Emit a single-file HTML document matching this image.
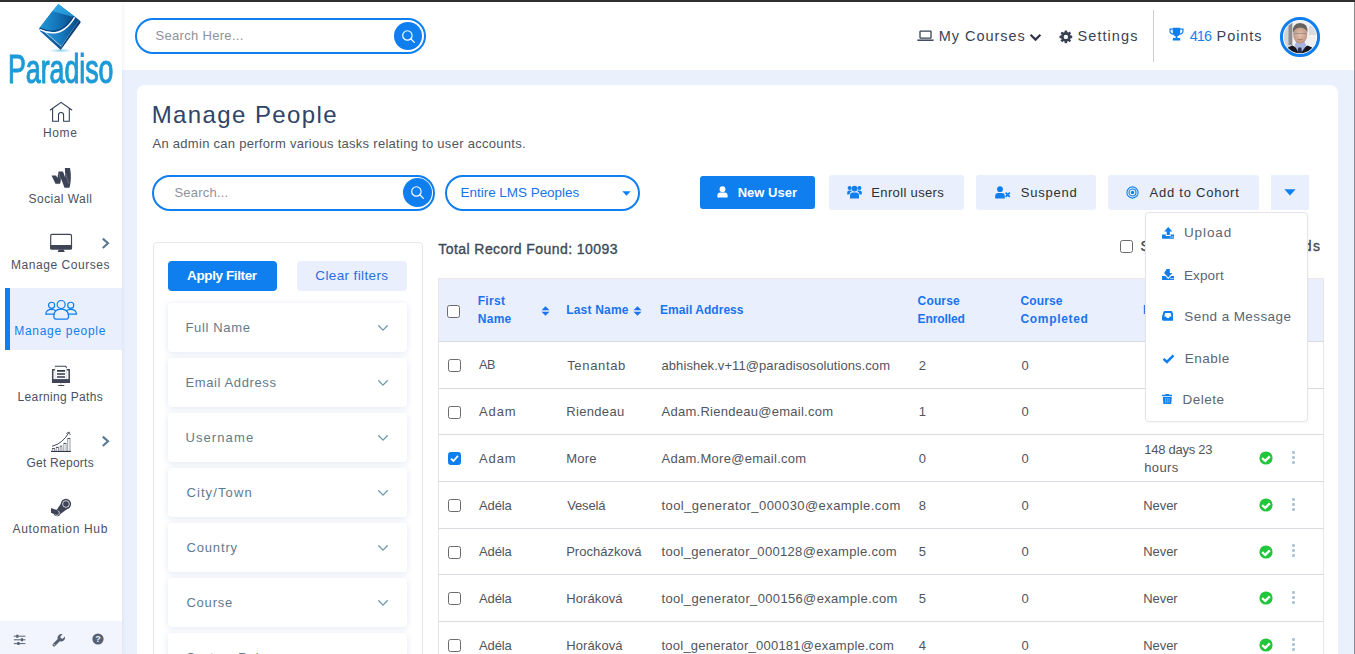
<!DOCTYPE html>
<html lang="en">
<head>
<meta charset="utf-8">
<title>Manage People</title>
<style>
*{box-sizing:border-box;margin:0;padding:0}
html,body{width:1355px;height:654px;overflow:hidden}
body{position:relative;background:#eaf0fc;font-family:"Liberation Sans",sans-serif;color:#3d4653;font-size:13px}
.abs{position:absolute}
.nw{white-space:nowrap}
#topbar{left:0;top:0;width:1355px;height:2px;background:#2e2e2e;z-index:50}
#rightline{right:0;top:2px;width:1px;height:652px;background:#8a8a8a;z-index:50}
#header{left:122px;top:2px;width:1233px;height:68px;background:#fff}
#sidebar{left:0;top:2px;width:122px;height:652px;background:#fff;box-shadow:1px 0 3px rgba(120,140,180,.12)}
#sidefoot{left:0;top:621px;width:122px;height:33px;background:#f2f5fd}
.nav{position:absolute;left:0;width:122px;text-align:center;font-size:13px;color:#3d4653;white-space:nowrap}
.nav.active{color:#0f7ff0}
#activebg{left:5px;top:288px;width:117px;height:62px;background:#e9effc;border-left:5px solid #0f7ff0}
.pill{position:absolute;border:2px solid #0f7ff0;border-radius:19px;background:#fff}
.ph{position:absolute;color:#8a8f98;white-space:nowrap}
.sbtn{position:absolute;width:28px;height:28px;border-radius:50%;background:#0f7ff0}
#card{left:137px;top:85px;width:1201px;height:600px;background:#fff;border-radius:8px}
.btn{position:absolute;top:176px;height:34px;border-radius:3px;background:#e9effc;color:#2b2f36;font-size:14px;white-space:nowrap}
.btn span{position:absolute;top:9px}
#filter{left:153px;top:242px;width:270px;height:430px;border:1px solid #ebe6e9;border-radius:4px;background:#fff}
.fitem{position:absolute;left:168px;width:239px;height:49px;border-radius:4px;background:#fff;box-shadow:0 1px 6px rgba(90,120,190,.18);font-size:14px;color:#5a6b7b}
.fitem span{position:absolute;left:18px;top:15px;white-space:nowrap}
.fitem svg{position:absolute;left:209px;top:21px}
#thead{left:438px;top:279px;width:886px;height:62px;background:#e9effc}
.th{position:absolute;color:#0f7ff0;font-weight:bold;font-size:12.5px;line-height:18px;white-space:nowrap}
.row{position:absolute;left:438px;width:886px;height:0;border-top:1px solid #d9dbe0}
.td{position:absolute;font-size:13px;color:#4a4f57;white-space:nowrap}
.cb{position:absolute;width:13px;height:13px;border:1px solid #6b6b6b;border-radius:2.5px;background:#fff}
.cb.on{background:#0f7ff0;border-color:#0f7ff0}
#dd{left:1145px;top:212px;width:163px;height:210px;background:#fff;border:1px solid #e3e5ea;border-radius:4px;z-index:20;box-shadow:0 1px 3px rgba(0,0,0,.04)}
.ddi{position:absolute;font-size:14px;color:#5a6470;white-space:nowrap}
</style>
</head>
<body>
<div id="header" class="abs"></div>
<div id="sidebar" class="abs"></div>

<!-- SIDEBAR -->
<svg class="abs" style="left:30px;top:0px" width="60" height="56" viewBox="0 0 60 56">
 <defs>
  <linearGradient id="lgA" x1="0" y1="0" x2="1" y2="0"><stop offset="0" stop-color="#2397d8"/><stop offset=".55" stop-color="#1273b6"/><stop offset="1" stop-color="#0a4d8c"/></linearGradient>
  <linearGradient id="lgB" x1="0" y1="0" x2="1" y2="0"><stop offset="0" stop-color="#2fa2e2"/><stop offset=".55" stop-color="#167abe"/><stop offset="1" stop-color="#0a4584"/></linearGradient>
  <linearGradient id="lgC" x1="0" y1="0" x2="1" y2="1"><stop offset="0" stop-color="#35aee8"/><stop offset="1" stop-color="#1a8ccf"/></linearGradient>
  <linearGradient id="lgD" x1="0" y1="0" x2="1" y2="0"><stop offset="0" stop-color="#1672b6"/><stop offset="1" stop-color="#0b4f90"/></linearGradient>
  <radialGradient id="rg1" cx=".5" cy=".5" r=".5"><stop offset="0" stop-color="#7fcdee" stop-opacity=".95"/><stop offset="1" stop-color="#9ad8f2" stop-opacity="0"/></radialGradient>
 </defs>
 <ellipse cx="30.5" cy="50.6" rx="12" ry="2.2" fill="url(#rg1)"/>
 <path d="M9.6 27.8 L31.25 46.7 L30.8 49.9 L10.4 31.6 Q9.1 29.8 9.6 27.8Z" fill="url(#lgD)"/>
 <path d="M31.25 46.7 L49.2 20.1 Q51 21.2 50.5 22.8 L30.8 49.7Z" fill="#0a3f78"/>
 <path d="M28.3 3.9 L49.2 20.1 L31.4 46.2 L9.9 27.6Z" fill="url(#lgB)"/>
 <path d="M22.4 11.1 L43.2 16.6 C33.5 32.6 22 34 9.8 28.4 L9.6 27.8Z" fill="url(#lgA)"/>
 <path d="M28.3 3.9 L44.6 16.5 L43.2 16.9 L22.4 11.1Z" fill="url(#lgC)"/>
 <path d="M9.7 28.2 C22 34, 33.6 32.6, 43.4 16.4" fill="none" stroke="#0b4784" stroke-width="1.4"/>
 <path d="M10 29.7 C22.4 35.6, 34.6 34, 44.6 17.3" fill="none" stroke="#fff" stroke-width="1.4"/>
</svg>
<div class="abs nw" id="logotxt" style="left:7.6px;top:47px;height:45px;color:#1d9ad7;font-size:40px;line-height:45px;transform-origin:0 0;transform:scaleX(.668);-webkit-text-stroke:1.1px #1d9ad7">Paradiso</div>

<div class="abs" id="activebg"></div>

<svg class="abs" style="left:49px;top:100px" width="24" height="23" viewBox="0 0 24 23" fill="none" stroke="#2c3a55" stroke-width="1.05" stroke-linejoin="miter" stroke-linecap="round"><path d="M1.3 10 L12.05 2.3 L22.8 10"/><path d="M3.6 8.6 V21.3 H9.5 V14.95 A2.55 2.55 0 0 1 14.6 14.95 V21.3 H20.3 V8.6"/></svg>

<svg class="abs" style="left:50px;top:167px" width="23" height="22" viewBox="0 0 23 22"><path d="M1.5 8.5 H6.1 L7.4 11 L8.5 4.5 H13 L15.2 10.5 L14.9 1 H20 Q22 11 19.5 20.8 H14.5 L11.2 12 L10.1 16.8 H5.5Z" fill="#3d4356"/><path d="M8.6 5.6 L10.7 13.4 M15.3 6 L18.8 16.6" stroke="#fff" stroke-opacity=".45" stroke-width=".5" fill="none"/></svg>

<svg class="abs" style="left:50px;top:233px" width="23" height="20" viewBox="0 0 23 20"><rect x=".7" y="1.4" width="20.8" height="14.6" rx="1.3" fill="#fff" stroke="#3f4456" stroke-width="1.15"/><path d="M.15 12.1 H22.05 V15.3 Q22.05 16.55 20.8 16.55 H1.4 Q.15 16.55 .15 15.3Z" fill="#3f4456"/><path d="M8.8 16.5 H13.6 L14.8 19 H7.6Z" fill="#3f4456"/></svg>
<svg class="abs" style="left:101px;top:237px" width="10" height="13" viewBox="0 0 10 13" fill="none" stroke="#5a7890" stroke-width="2.1"><path d="M1.8 1.6 L7 6.3 L1.8 11"/></svg>

<svg class="abs" style="left:44px;top:299px" width="34" height="22" viewBox="0 0 34 22" fill="none" stroke="#0f7ff0" stroke-width="1.2" stroke-linejoin="round" stroke-linecap="round"><circle cx="17.15" cy="5.5" r="4"/><circle cx="7.6" cy="6.3" r="3.05"/><circle cx="26.7" cy="6.3" r="3.05"/><path d="M9.8 17.4 C9.8 12.4 12.6 10.2 17.15 10.2 C21.8 10.2 24.6 12.4 24.6 17.4 Q24.6 20.2 21.8 20.2 H12.6 Q9.8 20.2 9.8 17.4Z"/><path d="M9.9 15.1 H1.7 Q2.4 10.4 7.6 10.4 Q10.2 10.4 11.7 11.8"/><path d="M24.5 15.1 H32.6 Q31.9 10.4 26.7 10.4 Q24.1 10.4 22.6 11.8"/></svg>

<svg class="abs" style="left:50px;top:365px" width="22" height="22" viewBox="0 0 22 22"><rect x="2.7" y="4.8" width="16.5" height="12.4" fill="#fff" stroke="#3f4456" stroke-width="1.5"/><rect x="2" y="14.1" width="17.95" height="3.8" fill="#3f4456"/><path d="M4.9 14.1 V.9 H15.3 L16.8 2.4 V14.1Z" fill="#fff"/><path d="M4.9 1.3 H15.4 L16.8 2.7" fill="none" stroke="#3f4456" stroke-width="1.1"/><path d="M5.1 1.5 V14 M16.6 2.8 V14" stroke="#3f4456" stroke-opacity=".35" stroke-width=".5"/><path d="M7 5.9 H15.1 M7 8.95 H15.1 M7 12 H15.1" stroke="#343a4c" stroke-width="1.6"/><path d="M11 18 V20" stroke="#3f4456" stroke-opacity=".4" stroke-width=".9"/><path d="M8.6 20.45 H13.9" stroke="#3f4456" stroke-width="1.1" stroke-linecap="round"/></svg>

<svg class="abs" style="left:49px;top:430px" width="24" height="23" viewBox="0 0 24 23" fill="none" stroke="#2f3548"><path d="M2 21.45 H21.9" stroke-width="1.1"/><path d="M3 18.6 H5.9 M6.9 17.4 H9.8 M10.8 16.2 H13.2 M14.5 13.4 H17.4 M18.4 8.5 H21.3" stroke-width="1" stroke-opacity=".9"/><path d="M3.3 19 V21 M5.6 19 V21 M7.2 18 V21 M9.5 18 V21 M11.1 17 V21 M12.9 17 V21 M14.8 14 V21 M17.1 14 V21 M18.7 9 V21 M21 9 V21" stroke-width=".7" stroke-opacity=".7"/><path d="M3 16.3 Q14 13.4 19.8 2.6" stroke-width="1" stroke-opacity=".9"/><path d="M17.2 3.5 L20.2 2 L21.3 5" stroke-width=".9" stroke-opacity=".8"/></svg>
<svg class="abs" style="left:101px;top:435px" width="10" height="13" viewBox="0 0 10 13" fill="none" stroke="#5a7890" stroke-width="2.1"><path d="M1.8 1.6 L7 6.3 L1.8 11"/></svg>

<svg class="abs" style="left:49px;top:497px" width="24" height="22" viewBox="0 0 24 22"><g fill="#3f4456"><circle cx="16.95" cy="7" r="5.15"/><circle cx="8.1" cy="16" r="3.25"/><path d="M7.6 13 L12.2 6.2 L19 11.4 L11 17.2Z"/><path d="M2 10.9 L9 13.6 L6 17.6 L2 15.7Z"/></g><circle cx="16.95" cy="7" r="3.35" fill="none" stroke="#fff" stroke-width=".75"/><path d="M8.6 13.6 A2.45 2.45 0 1 1 6.1 17.6" fill="none" stroke="#fff" stroke-width=".7"/></svg>

<div class="abs" id="sidefoot"></div>
<svg class="abs" style="left:13px;top:634px" width="13" height="12" viewBox="0 0 13 12" stroke="#566072" fill="none"><path d="M.8 2.2 H12.4 M.8 5.8 H12.4 M.8 9.6 H12.4" stroke-width="1"/><path d="M4.3 .7 V3.7 M9 4.3 V7.3 M5.4 8.1 V11.1" stroke-width="2.2"/></svg>
<svg class="abs" style="left:52px;top:633px" width="14" height="14" viewBox="0 0 14 14"><path d="M12.9 3.6 L10.7 5.8 L8.8 5.3 L8.3 3.4 L10.5 1.2 A3.9 3.9 0 0 0 5.7 6.1 L1 10.8 A1.45 1.45 0 0 0 3.1 12.9 L7.8 8.2 A3.9 3.9 0 0 0 12.9 3.6Z" fill="#566072"/><circle cx="2.2" cy="11.7" r=".6" fill="#f2f5fd"/></svg>
<svg class="abs" style="left:91.6px;top:633.4px" width="12" height="12" viewBox="0 0 12 12"><circle cx="6" cy="6" r="5.6" fill="#566072"/><text x="6" y="9.3" text-anchor="middle" font-family="Liberation Sans, sans-serif" font-weight="bold" font-size="9" fill="#f2f5fd">?</text></svg>

<!-- HEADER -->
<div class="pill" style="left:135px;top:18px;width:291px;height:36px"></div>
<div class="sbtn" style="left:394px;top:22px"></div>
<svg class="abs" style="left:401px;top:29px" width="15" height="15" viewBox="0 0 15 15" fill="none" stroke="#fff" stroke-width="1.15" stroke-linecap="round"><circle cx="6.4" cy="6.4" r="4.7"/><path d="M10 10 L13.4 13.4"/></svg>

<svg class="abs" style="left:917px;top:30px" width="17" height="12" viewBox="0 0 17 12" fill="none" stroke="#3b4256"><rect x="3" y="1.1" width="11" height="7" rx=".6" stroke-width="1.3"/><path d="M.4 10.2 H16.6" stroke-width="1.5"/></svg>
<svg class="abs" style="left:1029px;top:33px" width="13" height="9" viewBox="0 0 13 9" fill="none" stroke="#2f3545" stroke-width="2.2"><path d="M1.6 1.8 L6.5 6.6 L11.4 1.8"/></svg>
<svg class="abs" style="left:1059px;top:29.6px" width="14" height="14" viewBox="0 0 14 14"><g fill="#3a4054" transform="translate(6.87 6.9)"><circle r="4.85"/><g id="gt"><rect x="-1.3" y="-6.35" width="2.6" height="12.7" rx=".4"/></g><use href="#gt" transform="rotate(45)"/><use href="#gt" transform="rotate(90)"/><use href="#gt" transform="rotate(135)"/><circle r="2.2" fill="#fff"/></g></svg>
<div class="abs" style="left:1153px;top:10px;width:1px;height:52px;background:#cfcfcf"></div>
<svg class="abs" style="left:1169px;top:27px" width="15" height="14" viewBox="0 0 15 14" fill="#0f7ff0"><path d="M3.8 .8 H11.2 V5 Q11.2 8.6 8.4 9.2 V11 H10.6 Q11.2 11 11.2 11.6 V13.4 H3.8 V11.6 Q3.8 11 4.4 11 H6.6 V9.2 Q3.8 8.6 3.8 5Z"/><path d="M3.9 2.2 H1 V4 Q1 6.8 4.6 7.2 M11.1 2.2 H14 V4 Q14 6.8 10.4 7.2" fill="none" stroke="#0f7ff0" stroke-width="1.2"/></svg>
<svg class="abs" style="left:1279px;top:16px" width="42" height="42" viewBox="0 0 42 42">
 <defs><clipPath id="avc"><circle cx="21" cy="21" r="16.2"/></clipPath>
 <filter id="avb" x="-10%" y="-10%" width="120%" height="120%"><feGaussianBlur stdDeviation=".55"/></filter>
 <radialGradient id="avf" cx=".5" cy=".5" r=".6"><stop offset="0" stop-color="#e3c3b0"/><stop offset=".7" stop-color="#c79f8a"/><stop offset="1" stop-color="#9c7866"/></radialGradient></defs>
 <circle cx="21" cy="21" r="18.6" fill="#fff" stroke="#0f7ff0" stroke-width="3"/>
 <g clip-path="url(#avc)"><g filter="url(#avb)">
  <rect x="0" y="0" width="42" height="42" fill="#f1f1f2"/>
  <rect x="4" y="3" width="10" height="28" fill="#d4d4d6"/>
  <rect x="9.5" y="3" width="3.6" height="26" fill="#8d8d91"/>
  <rect x="30" y="10" width="8" height="9" fill="#dcdcde"/>
  <path d="M3 41 Q5 31.5 13.5 29.4 L21 34 L28.5 29.4 Q37 31.5 39 41Z" fill="#15171d"/>
  <path d="M15.6 29.2 L20.6 39 L27.4 29.4 L25 25 H17.6Z" fill="#a9b3dd"/>
  <path d="M19.4 31.6 L22.2 31.4 L23.4 39 H17.6Z" fill="#2a3150"/>
  <ellipse cx="21.2" cy="18.6" rx="7" ry="8.9" fill="url(#avf)"/>
  <path d="M14 17 Q12.8 7.4 21 7 Q29.4 7.2 28.4 17 Q27.4 11.8 21.2 11.4 Q15.6 11.6 14 17Z" fill="#66625f"/>
  <path d="M15.4 17.4 H27" stroke="#6f6a70" stroke-width=".7" opacity=".8"/>
  <path d="M18.6 23.2 Q21.2 24.4 23.8 23.2" stroke="#9a6a5c" stroke-width=".7" fill="none"/>
 </g></g>
</svg>
<div id="topbar" class="abs"></div>
<div id="rightline" class="abs"></div>
<div id="card" class="abs"></div>
<!--MAIN-START-->
<div class="abs nw" style="left:43.0px;top:125.1px;font-size:12px;line-height:16px;color:#4b5160;letter-spacing:0.62px">Home</div>
<div class="abs nw" style="left:28.6px;top:191.1px;font-size:12px;line-height:16px;color:#4b5160;letter-spacing:0.44px">Social Wall</div>
<div class="abs nw" style="left:10.9px;top:257.0px;font-size:12px;line-height:16px;color:#4b5160;letter-spacing:0.56px">Manage Courses</div>
<div class="abs nw" style="left:14.3px;top:323.2px;font-size:12px;line-height:16px;color:#0f7ff0;letter-spacing:0.69px">Manage people</div>
<div class="abs nw" style="left:17.6px;top:389.0px;font-size:12px;line-height:16px;color:#4b5160;letter-spacing:0.34px">Learning Paths</div>
<div class="abs nw" style="left:26.4px;top:455.2px;font-size:12px;line-height:16px;color:#4b5160;letter-spacing:0.26px">Get Reports</div>
<div class="abs nw" style="left:12.5px;top:521.3px;font-size:12px;line-height:16px;color:#4b5160;letter-spacing:0.68px">Automation Hub</div>
<div class="abs nw" style="left:155.4px;top:27.2px;font-size:13px;line-height:17px;color:#8e9299;letter-spacing:0.32px">Search Here...</div>
<div class="abs nw" style="left:938.7px;top:26.5px;font-size:14.5px;line-height:19px;color:#3b4256;letter-spacing:0.98px">My Courses</div>
<div class="abs nw" style="left:1077.5px;top:26.5px;font-size:14.5px;line-height:19px;color:#3b4256;letter-spacing:1.07px">Settings</div>
<div class="abs nw" style="left:1189.7px;top:26.5px;font-size:14.5px;line-height:19px;color:#1a7ff0;letter-spacing:-0.91px">416</div>
<div class="abs nw" style="left:1216.6px;top:26.5px;font-size:14.5px;line-height:19px;color:#3b4256;letter-spacing:0.91px">Points</div>
<div class="abs nw" style="left:151.7px;top:98.6px;font-size:24px;line-height:31px;color:#2f4468;letter-spacing:1.40px">Manage People</div>
<div class="abs nw" style="left:152.5px;top:135.0px;font-size:13px;line-height:17px;color:#4f5560;letter-spacing:0.28px">An admin can perform various tasks relating to user accounts.</div>
<div class="pill" style="left:152px;top:175px;width:283px;height:36px"></div>
<div class="abs nw" style="left:174.5px;top:184.4px;font-size:13px;line-height:17px;color:#8e9299;letter-spacing:0.20px">Search...</div>
<div class="sbtn" style="left:402.6px;top:178.2px;width:29px;height:29px"></div>
<svg class="abs" style="left:409.8px;top:185.4px" width="15" height="15" viewBox="0 0 15 15" fill="none" stroke="#fff" stroke-width="1.15" stroke-linecap="round"><circle cx="6.4" cy="6.4" r="4.7"/><path d="M10 10 L13.4 13.4"/></svg>
<div class="pill" style="left:445px;top:175px;width:195px;height:36px"></div>
<div class="abs nw" style="left:460.6px;top:183.9px;font-size:13.5px;line-height:18px;color:#1a73e8;letter-spacing:-0.04px">Entire LMS Peoples</div>
<svg class="abs" style="left:622px;top:191px" width="9" height="5" viewBox="0 0 9 5"><path d="M.3 .2 H8.7 L4.5 4.8Z" fill="#0f7ff0"/></svg>
<div class="btn" style="left:700px;top:176px;width:115px;height:33px;background:#0f7ff0"></div>
<svg class="abs" style="left:717px;top:186px" width="11" height="12" viewBox="0 0 11 12" fill="#fff"><circle cx="5.5" cy="3.2" r="2.9"/><path d="M.4 11.6 V9.4 Q.4 6.4 3.4 6.4 H7.6 Q10.6 6.4 10.6 9.4 V11.6Z"/></svg>
<div class="abs nw" style="left:737.7px;top:184.3px;font-size:13px;line-height:17px;color:#fff;letter-spacing:0.02px;font-weight:bold">New User</div>
<div class="btn" style="left:829px;top:175px;width:135px;height:35px"></div>
<svg class="abs" style="left:847px;top:185px" width="15" height="14" viewBox="0 0 15 14" fill="#0f7ff0"><circle cx="7.5" cy="3.6" r="2.9"/><circle cx="2.6" cy="3" r="2"/><circle cx="12.4" cy="3" r="2"/><path d="M3 13.6 V10.6 Q3 7.4 6 7.4 H9 Q12 7.4 12 10.6 V13.6Z"/><path d="M.2 9.6 V7.6 Q.2 5.6 2.2 5.6 H4 Q4.6 5.6 5 6 Q2.6 7 2.4 9.6Z"/><path d="M14.8 9.6 V7.6 Q14.8 5.6 12.8 5.6 H11 Q10.4 5.6 10 6 Q12.4 7 12.6 9.6Z"/></svg>
<div class="abs nw" style="left:871.3px;top:184.3px;font-size:13px;line-height:17px;color:#2b2f36;letter-spacing:0.35px">Enroll users</div>
<div class="btn" style="left:976px;top:175px;width:120px;height:35px"></div>
<svg class="abs" style="left:995px;top:186px" width="16" height="13" viewBox="0 0 16 13" fill="#0f7ff0"><circle cx="5" cy="3.2" r="2.9"/><path d="M.2 12.4 V10 Q.2 7 3.2 7 H6.8 Q9.8 7 9.8 10 V12.4Z"/><path d="M10.6 6.6 L14.8 10.8 M14.8 6.6 L10.6 10.8" stroke="#0f7ff0" stroke-width="1.7" fill="none"/></svg>
<div class="abs nw" style="left:1020.8px;top:184.3px;font-size:13px;line-height:17px;color:#2b2f36;letter-spacing:0.78px">Suspend</div>
<div class="btn" style="left:1108px;top:175px;width:151px;height:35px"></div>
<svg class="abs" style="left:1126px;top:186px" width="13" height="13" viewBox="0 0 13 13" fill="none" stroke="#0f7ff0"><circle cx="6.5" cy="6.5" r="5.6" stroke-width="1.1"/><circle cx="6.5" cy="6.5" r="3.5" stroke-width="1.1"/><circle cx="6.5" cy="6.5" r="1.7" fill="#0f7ff0" stroke="none"/></svg>
<div class="abs nw" style="left:1149.6px;top:184.3px;font-size:13px;line-height:17px;color:#2b2f36;letter-spacing:0.75px">Add to Cohort</div>
<div class="btn" style="left:1271px;top:175px;width:38px;height:35px;border-radius:0"></div>
<svg class="abs" style="left:1284px;top:189px" width="12" height="7" viewBox="0 0 12 7"><path d="M.4 .3 H11.6 L6 6.6Z" fill="#0f7ff0"/></svg>
<div class="abs" id="filter"></div>
<div class="abs" style="left:168px;top:261px;width:109px;height:30px;border-radius:4px;background:#0f7ff0"></div>
<div class="abs nw" style="left:187.1px;top:267.4px;font-size:13.5px;line-height:18px;color:#fff;letter-spacing:-0.39px;font-weight:bold">Apply Filter</div>
<div class="abs" style="left:297px;top:261px;width:110px;height:30px;border-radius:4px;background:#e9effc"></div>
<div class="abs nw" style="left:315.3px;top:267.4px;font-size:13.5px;line-height:18px;color:#2a6fe0;letter-spacing:0.37px">Clear filters</div>
<div class="fitem" style="top:303px"><svg width="12" height="8" viewBox="0 0 12 8" fill="none" stroke="#6d9aa8" stroke-width="1.3" stroke-linecap="round" stroke-linejoin="round"><path d="M1.7 1.7 L6 6.1 L10.3 1.7"/></svg></div>
<div class="abs nw" style="left:185.4px;top:319.2px;font-size:13px;line-height:17px;color:#5f7b8c;letter-spacing:0.66px">Full Name</div>
<div class="fitem" style="top:358px"><svg width="12" height="8" viewBox="0 0 12 8" fill="none" stroke="#6d9aa8" stroke-width="1.3" stroke-linecap="round" stroke-linejoin="round"><path d="M1.7 1.7 L6 6.1 L10.3 1.7"/></svg></div>
<div class="abs nw" style="left:185.4px;top:374.2px;font-size:13px;line-height:17px;color:#5f7b8c;letter-spacing:0.62px">Email Address</div>
<div class="fitem" style="top:413px"><svg width="12" height="8" viewBox="0 0 12 8" fill="none" stroke="#6d9aa8" stroke-width="1.3" stroke-linecap="round" stroke-linejoin="round"><path d="M1.7 1.7 L6 6.1 L10.3 1.7"/></svg></div>
<div class="abs nw" style="left:185.4px;top:429.2px;font-size:13px;line-height:17px;color:#5f7b8c;letter-spacing:1.11px">Username</div>
<div class="fitem" style="top:468px"><svg width="12" height="8" viewBox="0 0 12 8" fill="none" stroke="#6d9aa8" stroke-width="1.3" stroke-linecap="round" stroke-linejoin="round"><path d="M1.7 1.7 L6 6.1 L10.3 1.7"/></svg></div>
<div class="abs nw" style="left:186.4px;top:484.2px;font-size:13px;line-height:17px;color:#5f7b8c;letter-spacing:1.11px">City/Town</div>
<div class="fitem" style="top:523px"><svg width="12" height="8" viewBox="0 0 12 8" fill="none" stroke="#6d9aa8" stroke-width="1.3" stroke-linecap="round" stroke-linejoin="round"><path d="M1.7 1.7 L6 6.1 L10.3 1.7"/></svg></div>
<div class="abs nw" style="left:186.4px;top:539.2px;font-size:13px;line-height:17px;color:#5f7b8c;letter-spacing:0.86px">Country</div>
<div class="fitem" style="top:578px"><svg width="12" height="8" viewBox="0 0 12 8" fill="none" stroke="#6d9aa8" stroke-width="1.3" stroke-linecap="round" stroke-linejoin="round"><path d="M1.7 1.7 L6 6.1 L10.3 1.7"/></svg></div>
<div class="abs nw" style="left:186.4px;top:594.2px;font-size:13px;line-height:17px;color:#5f7b8c;letter-spacing:0.80px">Course</div>
<div class="fitem" style="top:633px"><svg width="12" height="8" viewBox="0 0 12 8" fill="none" stroke="#6d9aa8" stroke-width="1.3" stroke-linecap="round" stroke-linejoin="round"><path d="M1.7 1.7 L6 6.1 L10.3 1.7"/></svg></div>
<div class="abs nw" style="left:186.4px;top:649.2px;font-size:13px;line-height:17px;color:#5f7b8c;letter-spacing:0.65px">System Role</div>
<div class="abs nw" style="left:438.3px;top:239.5px;font-size:14px;line-height:18px;color:#3c4a57;letter-spacing:0.43px;-webkit-text-stroke:0.35px #3c4a57">Total Record Found: 10093</div>
<div class="cb" style="left:1120px;top:240px"></div>
<div class="abs nw" style="left:1140.5px;top:236.6px;font-size:14px;line-height:18px;color:#3c4a57;letter-spacing:1.27px;-webkit-text-stroke:0.35px #3c4a57">Select all 10093 records</div>
<div class="abs" id="thead"></div>
<div class="abs" style="left:438px;top:278px;width:886px;height:1px;background:#efe6e8"></div>
<div class="abs" style="left:438px;top:278px;width:1px;height:380px;background:#e9e4e6"></div>
<div class="abs" style="left:1323px;top:278px;width:1px;height:380px;background:#e9e4e6"></div>
<div class="cb" style="left:447px;top:305px"></div>
<div class="abs nw" style="left:477.7px;top:293.1px;font-size:12px;line-height:16px;color:#1a73f0;letter-spacing:0.30px;font-weight:bold">First</div>
<div class="abs nw" style="left:477.7px;top:311.2px;font-size:12px;line-height:16px;color:#1a73f0;letter-spacing:0.30px;font-weight:bold">Name</div>
<svg class="abs" style="left:540.8px;top:305.6px" width="9" height="10" viewBox="0 0 9 10" fill="#1a73f0"><path d="M4.5 .2 L8.5 4.2 H.5Z"/><path d="M4.5 9.8 L8.5 5.8 H.5Z"/></svg>
<div class="abs nw" style="left:566.2px;top:302.2px;font-size:12px;line-height:16px;color:#1a73f0;letter-spacing:0.20px;font-weight:bold">Last Name</div>
<svg class="abs" style="left:633.3px;top:305.6px" width="9" height="10" viewBox="0 0 9 10" fill="#1a73f0"><path d="M4.5 .2 L8.5 4.2 H.5Z"/><path d="M4.5 9.8 L8.5 5.8 H.5Z"/></svg>
<div class="abs nw" style="left:660.0px;top:302.2px;font-size:12px;line-height:16px;color:#1a73f0;letter-spacing:0.05px;font-weight:bold">Email Address</div>
<div class="abs nw" style="left:917.6px;top:293.1px;font-size:12px;line-height:16px;color:#1a73f0;letter-spacing:0.15px;font-weight:bold">Course</div>
<div class="abs nw" style="left:917.6px;top:311.2px;font-size:12px;line-height:16px;color:#1a73f0;letter-spacing:-0.10px;font-weight:bold">Enrolled</div>
<div class="abs nw" style="left:1020.4px;top:293.1px;font-size:12px;line-height:16px;color:#1a73f0;letter-spacing:0.15px;font-weight:bold">Course</div>
<div class="abs nw" style="left:1020.4px;top:311.2px;font-size:12px;line-height:16px;color:#1a73f0;letter-spacing:0.69px;font-weight:bold">Completed</div>
<div class="abs nw" style="left:1143.0px;top:302.2px;font-size:12px;line-height:16px;color:#1a73f0;letter-spacing:0.30px;font-weight:bold">Last Access</div>
<div class="row" style="top:341px"></div>
<div class="cb" style="left:448px;top:359.4px"></div>
<div class="abs nw" style="left:479.0px;top:357.1px;font-size:12.61px;line-height:16px;color:#50555d;letter-spacing:-0.37px">AB</div>
<div class="abs nw" style="left:567.2px;top:356.6px;font-size:13px;line-height:17px;color:#50555d;letter-spacing:0.66px">Tenantab</div>
<div class="abs nw" style="left:661.5px;top:356.6px;font-size:13px;line-height:17px;color:#50555d;letter-spacing:0.08px">abhishek.v+11@paradisosolutions.com</div>
<div class="abs nw" style="left:918.8px;top:356.6px;font-size:13px;line-height:17px;color:#50555d;letter-spacing:0.33px">2</div>
<div class="abs nw" style="left:1021.5px;top:356.6px;font-size:13px;line-height:17px;color:#50555d;letter-spacing:0.33px">0</div>
<div class="row" style="top:388px"></div>
<div class="cb" style="left:448px;top:405.9px"></div>
<div class="abs nw" style="left:479.0px;top:403.1px;font-size:13px;line-height:17px;color:#50555d;letter-spacing:0.89px">Adam</div>
<div class="abs nw" style="left:566.2px;top:403.1px;font-size:13px;line-height:17px;color:#50555d;letter-spacing:0.34px">Riendeau</div>
<div class="abs nw" style="left:661.5px;top:403.1px;font-size:13px;line-height:17px;color:#50555d;letter-spacing:0.27px">Adam.Riendeau@email.com</div>
<div class="abs nw" style="left:918.8px;top:403.1px;font-size:13px;line-height:17px;color:#50555d;letter-spacing:0.33px">1</div>
<div class="abs nw" style="left:1021.5px;top:403.1px;font-size:13px;line-height:17px;color:#50555d;letter-spacing:0.33px">0</div>
<div class="row" style="top:434px"></div>
<div class="cb on" style="left:448px;top:452.4px"><svg width="11" height="11" viewBox="0 0 11 11" style="position:absolute;left:0;top:0" fill="none" stroke="#fff" stroke-width="1.8"><path d="M2 5.6 L4.4 8 L9 2.8"/></svg></div>
<div class="abs nw" style="left:479.0px;top:449.6px;font-size:13px;line-height:17px;color:#50555d;letter-spacing:0.89px">Adam</div>
<div class="abs nw" style="left:566.2px;top:449.6px;font-size:13px;line-height:17px;color:#50555d;letter-spacing:0.24px">More</div>
<div class="abs nw" style="left:661.5px;top:449.6px;font-size:13px;line-height:17px;color:#50555d;letter-spacing:0.28px">Adam.More@email.com</div>
<div class="abs nw" style="left:918.8px;top:449.6px;font-size:13px;line-height:17px;color:#50555d;letter-spacing:0.33px">0</div>
<div class="abs nw" style="left:1021.5px;top:449.6px;font-size:13px;line-height:17px;color:#50555d;letter-spacing:0.33px">0</div>
<div class="abs nw" style="left:1144.3px;top:440.6px;font-size:13px;line-height:17px;color:#50555d;letter-spacing:-0.26px">148 days 23</div>
<div class="abs nw" style="left:1144.3px;top:458.6px;font-size:13px;line-height:17px;color:#50555d;letter-spacing:0.33px">hours</div>
<svg class="abs" style="left:1259.1px;top:451.0px" width="14" height="14" viewBox="0 0 14 14"><circle cx="7" cy="7" r="6.6" fill="#22c63a"/><path d="M3.1 7.2 L6.3 9.9 L10.8 5.4" fill="none" stroke="#fff" stroke-width="2.3"/></svg>
<svg class="abs" style="left:1291px;top:449.9px" width="5" height="15" viewBox="0 0 5 15" fill="#abc5d7"><rect x="1" y="1" width="3" height="3" rx="1.2"/><rect x="1" y="6" width="3" height="3" rx="1.2"/><rect x="1" y="11" width="3" height="3" rx="1.2"/></svg>
<div class="row" style="top:481px"></div>
<div class="cb" style="left:448px;top:499.4px"></div>
<div class="abs nw" style="left:479.0px;top:496.6px;font-size:13px;line-height:17px;color:#50555d;letter-spacing:-0.10px">Adéla</div>
<div class="abs nw" style="left:567.2px;top:496.6px;font-size:13px;line-height:17px;color:#50555d;letter-spacing:-0.14px">Veselá</div>
<div class="abs nw" style="left:661.5px;top:496.6px;font-size:13px;line-height:17px;color:#50555d;letter-spacing:0.43px">tool_generator_000030@example.com</div>
<div class="abs nw" style="left:918.8px;top:496.6px;font-size:13px;line-height:17px;color:#50555d;letter-spacing:0.33px">8</div>
<div class="abs nw" style="left:1021.5px;top:496.6px;font-size:13px;line-height:17px;color:#50555d;letter-spacing:0.33px">0</div>
<div class="abs nw" style="left:1143.3px;top:496.6px;font-size:13px;line-height:17px;color:#50555d;letter-spacing:-0.09px">Never</div>
<svg class="abs" style="left:1259.1px;top:498.0px" width="14" height="14" viewBox="0 0 14 14"><circle cx="7" cy="7" r="6.6" fill="#22c63a"/><path d="M3.1 7.2 L6.3 9.9 L10.8 5.4" fill="none" stroke="#fff" stroke-width="2.3"/></svg>
<svg class="abs" style="left:1291px;top:496.9px" width="5" height="15" viewBox="0 0 5 15" fill="#abc5d7"><rect x="1" y="1" width="3" height="3" rx="1.2"/><rect x="1" y="6" width="3" height="3" rx="1.2"/><rect x="1" y="11" width="3" height="3" rx="1.2"/></svg>
<div class="row" style="top:528px"></div>
<div class="cb" style="left:448px;top:545.9px"></div>
<div class="abs nw" style="left:479.0px;top:543.1px;font-size:13px;line-height:17px;color:#50555d;letter-spacing:-0.10px">Adéla</div>
<div class="abs nw" style="left:566.2px;top:543.1px;font-size:13px;line-height:17px;color:#50555d;letter-spacing:0.01px">Procházková</div>
<div class="abs nw" style="left:661.5px;top:543.1px;font-size:13px;line-height:17px;color:#50555d;letter-spacing:0.32px">tool_generator_000128@example.com</div>
<div class="abs nw" style="left:918.8px;top:543.1px;font-size:13px;line-height:17px;color:#50555d;letter-spacing:0.33px">5</div>
<div class="abs nw" style="left:1021.5px;top:543.1px;font-size:13px;line-height:17px;color:#50555d;letter-spacing:0.33px">0</div>
<div class="abs nw" style="left:1143.3px;top:543.1px;font-size:13px;line-height:17px;color:#50555d;letter-spacing:-0.09px">Never</div>
<svg class="abs" style="left:1259.1px;top:544.5px" width="14" height="14" viewBox="0 0 14 14"><circle cx="7" cy="7" r="6.6" fill="#22c63a"/><path d="M3.1 7.2 L6.3 9.9 L10.8 5.4" fill="none" stroke="#fff" stroke-width="2.3"/></svg>
<svg class="abs" style="left:1291px;top:543.4px" width="5" height="15" viewBox="0 0 5 15" fill="#abc5d7"><rect x="1" y="1" width="3" height="3" rx="1.2"/><rect x="1" y="6" width="3" height="3" rx="1.2"/><rect x="1" y="11" width="3" height="3" rx="1.2"/></svg>
<div class="row" style="top:574px"></div>
<div class="cb" style="left:448px;top:592.4px"></div>
<div class="abs nw" style="left:479.0px;top:589.6px;font-size:13px;line-height:17px;color:#50555d;letter-spacing:-0.10px">Adéla</div>
<div class="abs nw" style="left:566.2px;top:589.6px;font-size:13px;line-height:17px;color:#50555d;letter-spacing:0.11px">Horáková</div>
<div class="abs nw" style="left:661.5px;top:589.6px;font-size:13px;line-height:17px;color:#50555d;letter-spacing:0.34px">tool_generator_000156@example.com</div>
<div class="abs nw" style="left:918.8px;top:589.6px;font-size:13px;line-height:17px;color:#50555d;letter-spacing:0.33px">5</div>
<div class="abs nw" style="left:1021.5px;top:589.6px;font-size:13px;line-height:17px;color:#50555d;letter-spacing:0.33px">0</div>
<div class="abs nw" style="left:1143.3px;top:589.6px;font-size:13px;line-height:17px;color:#50555d;letter-spacing:-0.09px">Never</div>
<svg class="abs" style="left:1259.1px;top:591.0px" width="14" height="14" viewBox="0 0 14 14"><circle cx="7" cy="7" r="6.6" fill="#22c63a"/><path d="M3.1 7.2 L6.3 9.9 L10.8 5.4" fill="none" stroke="#fff" stroke-width="2.3"/></svg>
<svg class="abs" style="left:1291px;top:589.9px" width="5" height="15" viewBox="0 0 5 15" fill="#abc5d7"><rect x="1" y="1" width="3" height="3" rx="1.2"/><rect x="1" y="6" width="3" height="3" rx="1.2"/><rect x="1" y="11" width="3" height="3" rx="1.2"/></svg>
<div class="row" style="top:621px"></div>
<div class="cb" style="left:448px;top:639.4px"></div>
<div class="abs nw" style="left:479.0px;top:636.6px;font-size:13px;line-height:17px;color:#50555d;letter-spacing:-0.10px">Adéla</div>
<div class="abs nw" style="left:566.2px;top:636.6px;font-size:13px;line-height:17px;color:#50555d;letter-spacing:0.11px">Horáková</div>
<div class="abs nw" style="left:661.5px;top:636.6px;font-size:13px;line-height:17px;color:#50555d;letter-spacing:0.23px">tool_generator_000181@example.com</div>
<div class="abs nw" style="left:918.8px;top:636.6px;font-size:13px;line-height:17px;color:#50555d;letter-spacing:0.33px">4</div>
<div class="abs nw" style="left:1021.5px;top:636.6px;font-size:13px;line-height:17px;color:#50555d;letter-spacing:0.33px">0</div>
<div class="abs nw" style="left:1143.3px;top:636.6px;font-size:13px;line-height:17px;color:#50555d;letter-spacing:-0.09px">Never</div>
<svg class="abs" style="left:1259.1px;top:638.0px" width="14" height="14" viewBox="0 0 14 14"><circle cx="7" cy="7" r="6.6" fill="#22c63a"/><path d="M3.1 7.2 L6.3 9.9 L10.8 5.4" fill="none" stroke="#fff" stroke-width="2.3"/></svg>
<svg class="abs" style="left:1291px;top:636.9px" width="5" height="15" viewBox="0 0 5 15" fill="#abc5d7"><rect x="1" y="1" width="3" height="3" rx="1.2"/><rect x="1" y="6" width="3" height="3" rx="1.2"/><rect x="1" y="11" width="3" height="3" rx="1.2"/></svg>
<div class="abs" id="dd"></div>
<svg class="abs" style="z-index:21;left:1161.75px;top:227.2px" width="12.5" height="11.8" viewBox="0 0 12.5 11.8" fill="#0f7ff0"><path d="M6.25 0 L10.4 4.6 H7.85 V8 H4.65 V4.6 H2.1Z"/><path d="M0 7.6 H3.8 V8.9 H8.7 V7.6 H12.5 V11.1 Q12.5 11.8 11.8 11.8 H.7 Q0 11.8 0 11.1Z"/><rect x="8.3" y="9.6" width="1.3" height=".9" fill="#fff"/><rect x="10.2" y="9.6" width="1.3" height=".9" fill="#fff"/></svg>
<div class="abs nw" style="left:1183.9px;top:224.4px;font-size:13.5px;line-height:18px;color:#5a6675;letter-spacing:0.91px;z-index:21">Upload</div>
<svg class="abs" style="z-index:21;left:1161.75px;top:268.9px" width="12.5" height="11.2" viewBox="0 0 12.5 11.2" fill="#0f7ff0"><path d="M4.65 0 H7.85 V4 H10.4 L6.25 8.5 L2.1 4Z"/><path d="M0 7 H3.3 L6.25 10.1 L9.2 7 H12.5 V10.5 Q12.5 11.2 11.8 11.2 H.7 Q0 11.2 0 10.5Z"/><rect x="8.3" y="9.2" width="1.3" height=".9" fill="#fff"/><rect x="10.2" y="9.2" width="1.3" height=".9" fill="#fff"/></svg>
<div class="abs nw" style="left:1183.9px;top:266.6px;font-size:13.5px;line-height:18px;color:#5a6675;letter-spacing:0.15px;z-index:21">Export</div>
<svg class="abs" style="z-index:21;left:1161.7px;top:311.4px" width="11.8" height="9.7" viewBox="0 0 11.8 9.7" fill="#0f7ff0"><path d="M2.5 0 H9.3 Q10 0 10.3 .8 L11.8 5.4 V8.6 Q11.8 9.7 10.7 9.7 H1.1 Q0 9.7 0 8.6 V5.4 L1.5 .8 Q1.8 0 2.5 0Z M3.3 2 L2.2 5.4 H4 L4.8 6.9 H7 L7.8 5.4 H9.6 L8.5 2Z" fill-rule="evenodd"/></svg>
<div class="abs nw" style="left:1184.3px;top:307.6px;font-size:13.5px;line-height:18px;color:#5a6675;letter-spacing:0.41px;z-index:21">Send a Message</div>
<svg class="abs" style="z-index:21;left:1162px;top:353.5px" width="13" height="10" viewBox="0 0 13 10" fill="none" stroke="#0f7ff0" stroke-width="2.5"><path d="M1.5 4.9 L4.9 8 L11.5 1.4"/></svg>
<div class="abs nw" style="left:1184.8px;top:349.6px;font-size:13.5px;line-height:18px;color:#5a6675;letter-spacing:0.49px;z-index:21">Enable</div>
<svg class="abs" style="z-index:21;left:1161.7px;top:394px" width="10.6" height="10.4" viewBox="0 0 10.6 10.4" fill="#0f7ff0"><path d="M3.6 0 H7 L7.5 .8 H10.2 Q10.6 .8 10.6 1.2 V2.1 H0 V1.2 Q0 .8 .4 .8 H3.1Z"/><path d="M.8 2.8 H9.8 L9.3 9.5 Q9.2 10.4 8.3 10.4 H2.3 Q1.4 10.4 1.3 9.5Z"/><path d="M3.5 4 V9.2 M5.3 4 V9.2 M7.1 4 V9.2" stroke="#8cc0f8" stroke-width=".7"/></svg>
<div class="abs nw" style="left:1182.4px;top:390.8px;font-size:13.5px;line-height:18px;color:#5a6675;letter-spacing:0.54px;z-index:21">Delete</div>
<!--MAIN-END-->
</body>
</html>
